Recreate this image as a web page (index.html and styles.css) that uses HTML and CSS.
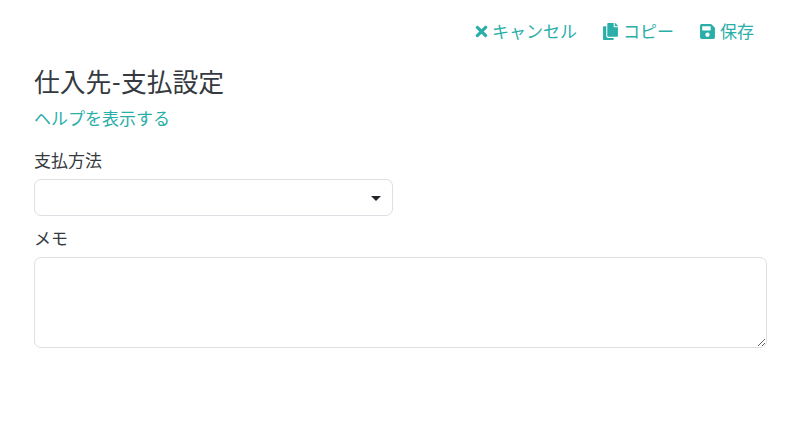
FILE: index.html
```html
<!DOCTYPE html>
<html lang="ja">
<head>
    <meta charset="UTF-8">
    <meta name="viewport" content="width=device-width, initial-scale=1.0">
    <title>仕入先-支払設定</title>
    <link rel="stylesheet" href="styles.css">
</head>
<body>
    <div class="toolbar">
        <a class="tool-btn" href="#">
            <svg class="icon icon-cancel" viewBox="0 0 352 512"><path fill="currentColor" d="M242.72 256l100.07-100.07c12.28-12.28 12.28-32.19 0-44.48l-22.24-22.24c-12.28-12.28-32.19-12.28-44.48 0L176 189.28 75.93 89.21c-12.28-12.28-32.19-12.28-44.48 0L9.21 111.45c-12.28 12.28-12.28 32.19 0 44.48L109.28 256 9.21 356.07c-12.28 12.28-12.28 32.19 0 44.48l22.24 22.24c12.28 12.28 32.2 12.28 44.48 0L176 322.72l100.07 100.07c12.28 12.28 32.2 12.28 44.48 0l22.24-22.24c12.28-12.28 12.28-32.19 0-44.48L242.72 256z"/></svg>キャンセル
        </a>
        <a class="tool-btn" href="#">
            <svg class="icon" viewBox="0 0 448 512"><path fill="currentColor" d="M320 448v40c0 13.255-10.745 24-24 24H24c-13.255 0-24-10.745-24-24V120c0-13.255 10.745-24 24-24h72v296c0 30.879 25.121 56 56 56h168zm0-344V0H152c-13.255 0-24 10.745-24 24v368c0 13.255 10.745 24 24 24h272c13.255 0 24-10.745 24-24V128H344c-13.2 0-24-10.8-24-24zm120.971-31.029L375.029 7.029A24 24 0 0 0 358.059 0H352v96h96v-6.059a24 24 0 0 0-7.029-16.97z"/></svg>コピー
        </a>
        <a class="tool-btn" href="#">
            <svg class="icon" viewBox="0 0 448 512"><path fill="currentColor" d="M433.941 129.941l-83.882-83.882A48 48 0 0 0 316.118 32H48C21.49 32 0 53.49 0 80v352c0 26.51 21.49 48 48 48h352c26.51 0 48-21.49 48-48V163.882a48 48 0 0 0-14.059-33.941zM224 416c-35.346 0-64-28.654-64-64 0-35.346 28.654-64 64-64s64 28.654 64 64c0 35.346-28.654 64-64 64zm96-304.52V212c0 6.627-5.373 12-12 12H76c-6.627 0-12-5.373-12-12V108c0-6.627 5.373-12 12-12h228.52c3.183 0 6.235 1.264 8.485 3.515l3.48 3.48A11.996 11.996 0 0 1 320 111.48z"/></svg>保存
        </a>
    </div>

    <div class="content">
        <h1 class="page-title">仕入先-支払設定</h1>
        <a class="help-link" href="#">ヘルプを表示する</a>

        <div class="form-group">
            <label class="form-label">支払方法</label>
            <div class="select-box"><span class="select-arrow"></span></div>
        </div>

        <div class="form-group">
            <label class="form-label">メモ</label>
            <textarea class="memo-input"></textarea>
        </div>
    </div>
</body>
</html>
```

FILE: styles.css
```css
body {
    margin: 0;
    background-color: #fff;
    color: #343a40;
    font-family: 'Lato', 'Noto Sans CJK JP', sans-serif;
    font-size: 17px;
    line-height: 1.5;
}
a {
    color: #2aaea8;
    text-decoration: none;
}
.toolbar {
    display: flex;
    justify-content: flex-end;
    gap: 26px;
    padding: 19px 46px 0 0;
    height: 31px;
}
.tool-btn {
    display: flex;
    align-items: center;
    height: 25px;
}
.icon {
    width: 15px;
    height: 17px;
    margin-right: 5px;
}
.icon-cancel {
    margin-right: 3px;
}
.content {
    padding: 0 33px 0 34px;
}
.page-title {
    margin: 13px 0 0;
    font-size: 25.8px;
    font-weight: 400;
    line-height: 38px;
}
.help-link {
    display: block;
    margin-top: 5px;
    line-height: 26px;
}
.form-group {
    margin-top: 16px;
}
.form-label {
    display: block;
    line-height: 26px;
    margin-bottom: 5px;
}
.form-group + .form-group {
    margin-top: 10px;
}
.select-box {
    position: relative;
    width: 357px;
    height: 35px;
    border: 1px solid #dcdfe3;
    border-radius: 7px;
    background-color: #fff;
}
.select-arrow {
    position: absolute;
    right: 11px;
    top: 16px;
    border-top: 5px solid #212529;
    border-left: 5px solid transparent;
    border-right: 5px solid transparent;
}
.memo-input {
    display: block;
    box-sizing: border-box;
    width: 100%;
    height: 91px;
    border: 1px solid #dcdfe3;
    border-radius: 7px;
    padding: 6px 12px;
    resize: vertical;
    outline: none;
}
```
